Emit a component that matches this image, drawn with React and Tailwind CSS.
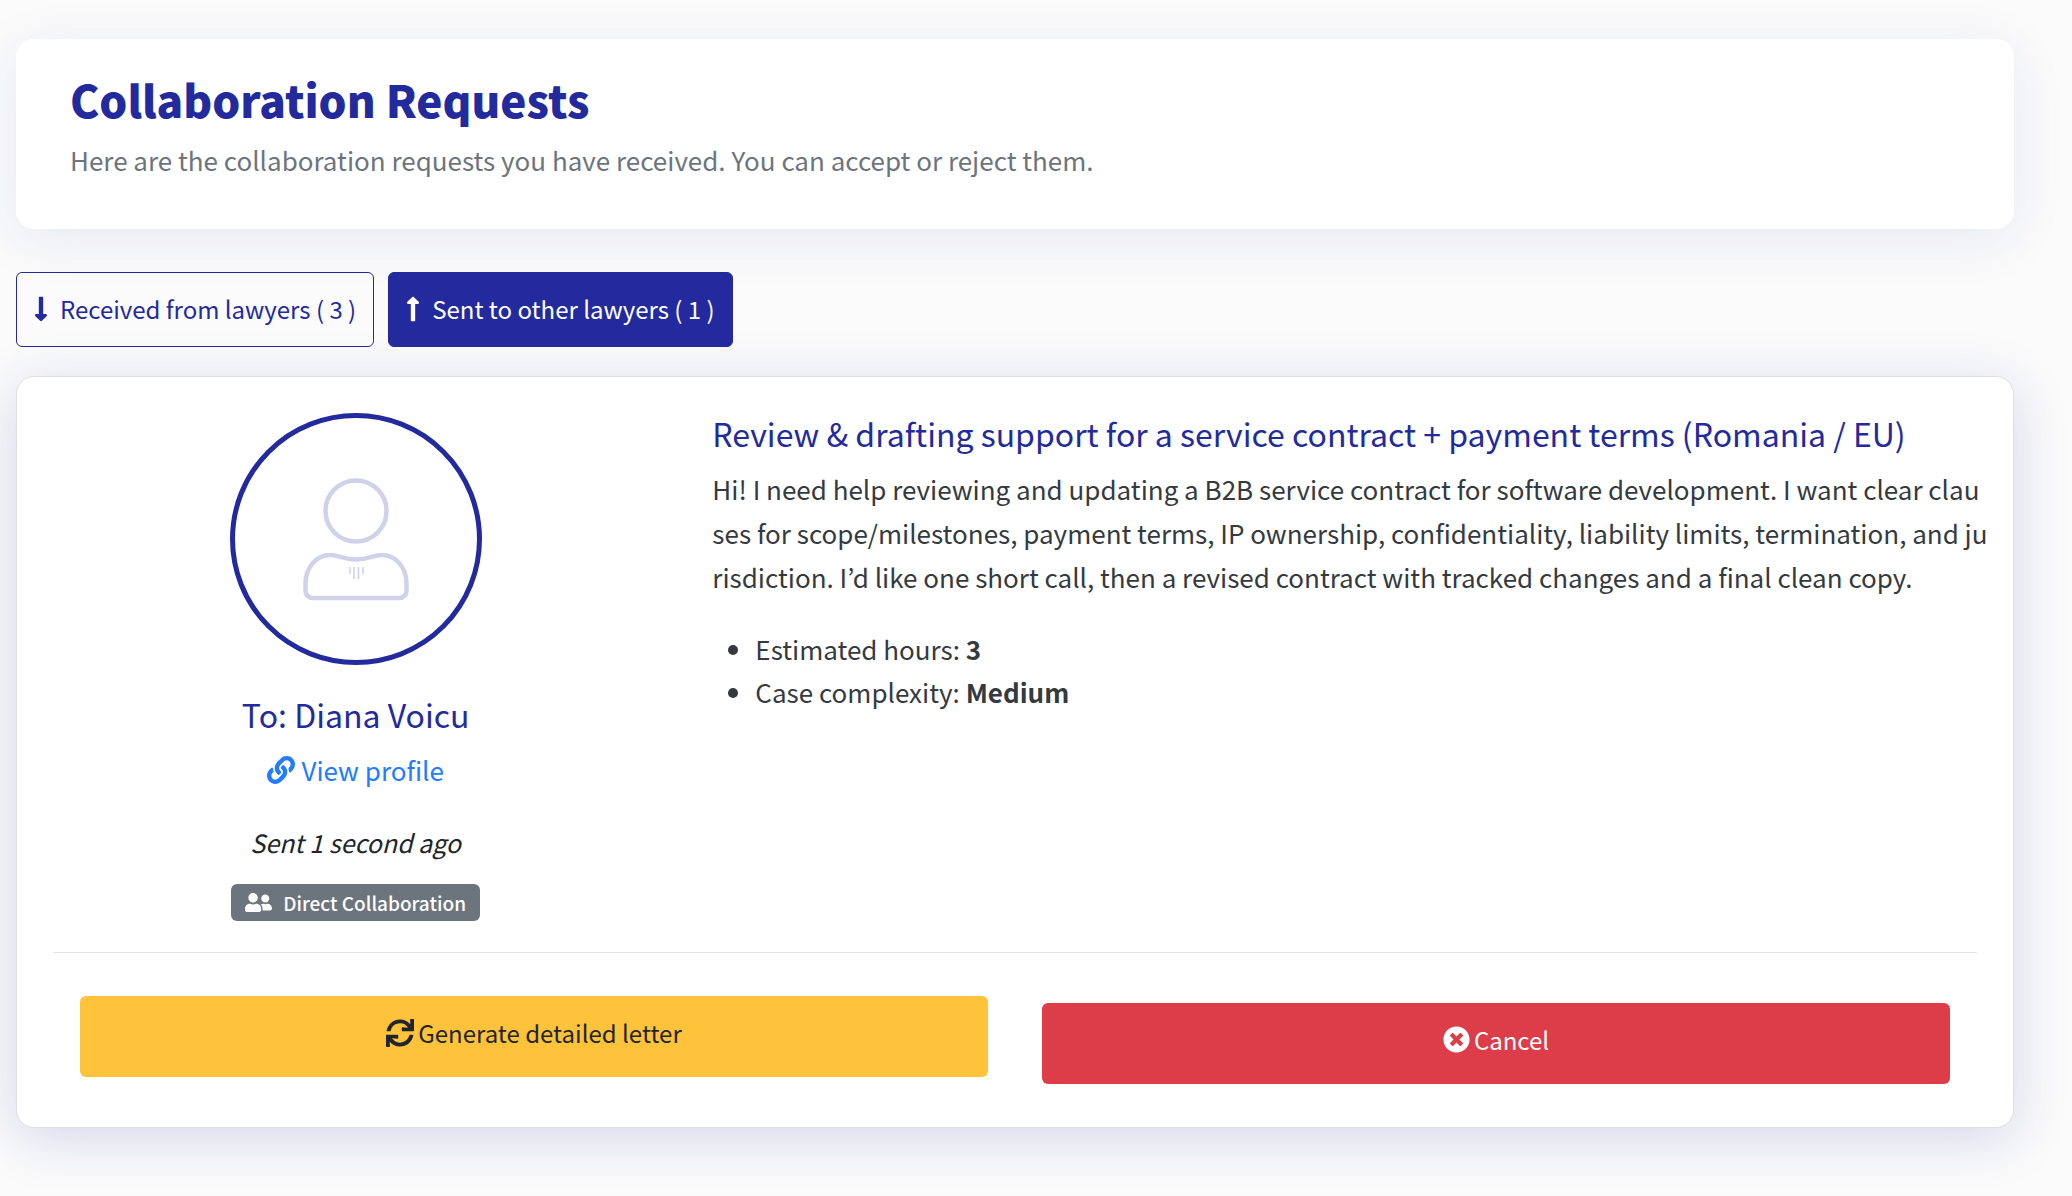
import { useState } from 'react';
import { FaLink, FaLongArrowAltDown, FaLongArrowAltUp, FaSync, FaTimesCircle, FaUserFriends } from 'react-icons/fa';

const request = {
  name: 'Diana Voicu',
  sent: 'Sent 1 second ago',
  type: 'Direct Collaboration',
  title: 'Review & drafting support for a service contract + payment terms (Romania / EU)',
  description: [
    'Hi! I need help reviewing and updating a B2B service contract for software development. I want clear clau',
    'ses for scope/milestones, payment terms, IP ownership, confidentiality, liability limits, termination, and ju',
    'risdiction. I’d like one short call, then a revised contract with tracked changes and a final clean copy.'
  ].join('\n'),
  details: [
    { label: 'Estimated hours', value: '3' },
    { label: 'Case complexity', value: 'Medium' }
  ]
};

const Avatar = () => (
  <div className="w-[252px] h-[252px] rounded-full border-5 border-[#232a9e] flex items-center justify-center">
    <svg className="w-[108px] h-[124px]" viewBox="0 0 108 124" fill="none" stroke="#cfd2ea" aria-hidden="true">
      <circle cx="54" cy="34" r="30.5" strokeWidth="4.5" />
      <path
        d="M3.5 107c0-17 11-29 25-29 8 0 13 4.500 25.500 4.500S71.500 78 79.500 78c14 0 25 12 25 29v7a7 7 0 0 1-7 7h-87a7 7 0 0 1-7-7z"
        strokeWidth="4.500"
      />
      <path d="M48 90v7M52 90v12M56.500 90v12M61 90v7" strokeWidth="1.500" />
    </svg>
  </div>
);

const RequestCard = ({ name, sent, type, title, description, details }) => (
  <article className="mt-[29px] bg-white border border-[#dedfe3] rounded-[18px] shadow-[0_10px_54px_rgba(35,42,158,0.18)] px-9 pt-9 pb-[43px]">
    <div className="grid grid-cols-3 gap-[54px]">
      <div className="flex flex-col items-center">
        <Avatar />
        <h2 className="mt-[27px] text-[32px] leading-[44px] text-[#232a9e]">To: {name}</h2>
        <a href="#profile" className="mt-3 flex items-center gap-1.5 text-[26px] leading-[44px] text-[#237bff]">
          <FaLink className="text-[28px]" />
          View profile
        </a>
        <p className="mt-7 text-[25px] leading-[44px] italic text-[#212529]">{sent}</p>
        <span className="mt-5 flex items-center gap-[11px] rounded-md bg-[#6c757d] px-3.5 text-[19px] leading-[37px] font-medium text-white">
          <FaUserFriends className="text-[27px]" />
          {type}
        </span>
      </div>
      <div className="col-span-2 -mt-0.5">
        <h3 className="text-[32px] leading-[44px] text-[#232a9e]">{title}</h3>
        <p className="mt-3 text-[26px] leading-[44px] whitespace-pre text-[#343a40]">{description}</p>
        <ul className="mt-7 pl-[43px] list-disc text-[26px] leading-[43px] text-[#343a40]">
          {details.map(item => (
            <li key={item.label}>
              {item.label}: <strong className="font-bold">{item.value}</strong>
            </li>
          ))}
        </ul>
      </div>
    </div>
    <hr className="mt-[31px] border-[#e3e4e6]" />
    <div className="mt-[43px] px-[27px] grid grid-cols-2 gap-[54px] items-start">
      <button className="h-[81px] pb-2 flex items-center justify-center gap-1 rounded-md bg-[#ffc23b] text-[24px] text-[#212529] cursor-pointer">
        <FaSync className="text-[28px]" />
        Generate detailed letter
      </button>
      <button className="mt-[7px] h-[81px] pb-2 flex items-center justify-center gap-1 rounded-md bg-[#dd3c49] text-[24px] text-white cursor-pointer">
        <FaTimesCircle className="text-[27px]" />
        Cancel
      </button>
    </div>
  </article>
);

const App = () => {
  const [tab, setTab] = useState('sent');

  const tabs = [
    { id: 'received', label: 'Received from lawyers ( 3 )', Icon: FaLongArrowAltDown },
    { id: 'sent', label: 'Sent to other lawyers ( 1 )', Icon: FaLongArrowAltUp }
  ];

  return (
    <main className="min-h-screen bg-[#fbfbfb] pl-4 pr-[58px] pt-[39px] pb-12 font-['Noto_Sans_CJK_KR',sans-serif]">
      <header className="bg-white rounded-[18px] shadow-[0_10px_54px_rgba(35,42,158,0.09)] px-[54px] pt-[29px] pb-[47px]">
        <h1 className="text-[44px] leading-[62px] font-black text-[#232a9e]">Collaboration Requests</h1>
        <p className="mt-2 text-[26px] leading-[44px] text-[#6c757d]">
          Here are the collaboration requests you have received. You can accept or reject them.
        </p>
      </header>

      <nav className="mt-[43px] flex gap-3.5">
        {tabs.map(({ id, label, Icon }) => (
          <button
            key={id}
            onClick={() => setTab(id)}
            className={`h-[75px] px-[17px] pb-0.5 flex items-center gap-3 rounded-md border border-[#232a9e] text-[24px] cursor-pointer ${
              tab === id ? 'bg-[#232a9e] text-white' : 'text-[#232a9e]'
            }`}
          >
            <Icon className="w-3.5 h-7" />
            {label}
          </button>
        ))}
      </nav>

      {tab === 'sent' && <RequestCard {...request} />}
    </main>
  );
};

export default App;
